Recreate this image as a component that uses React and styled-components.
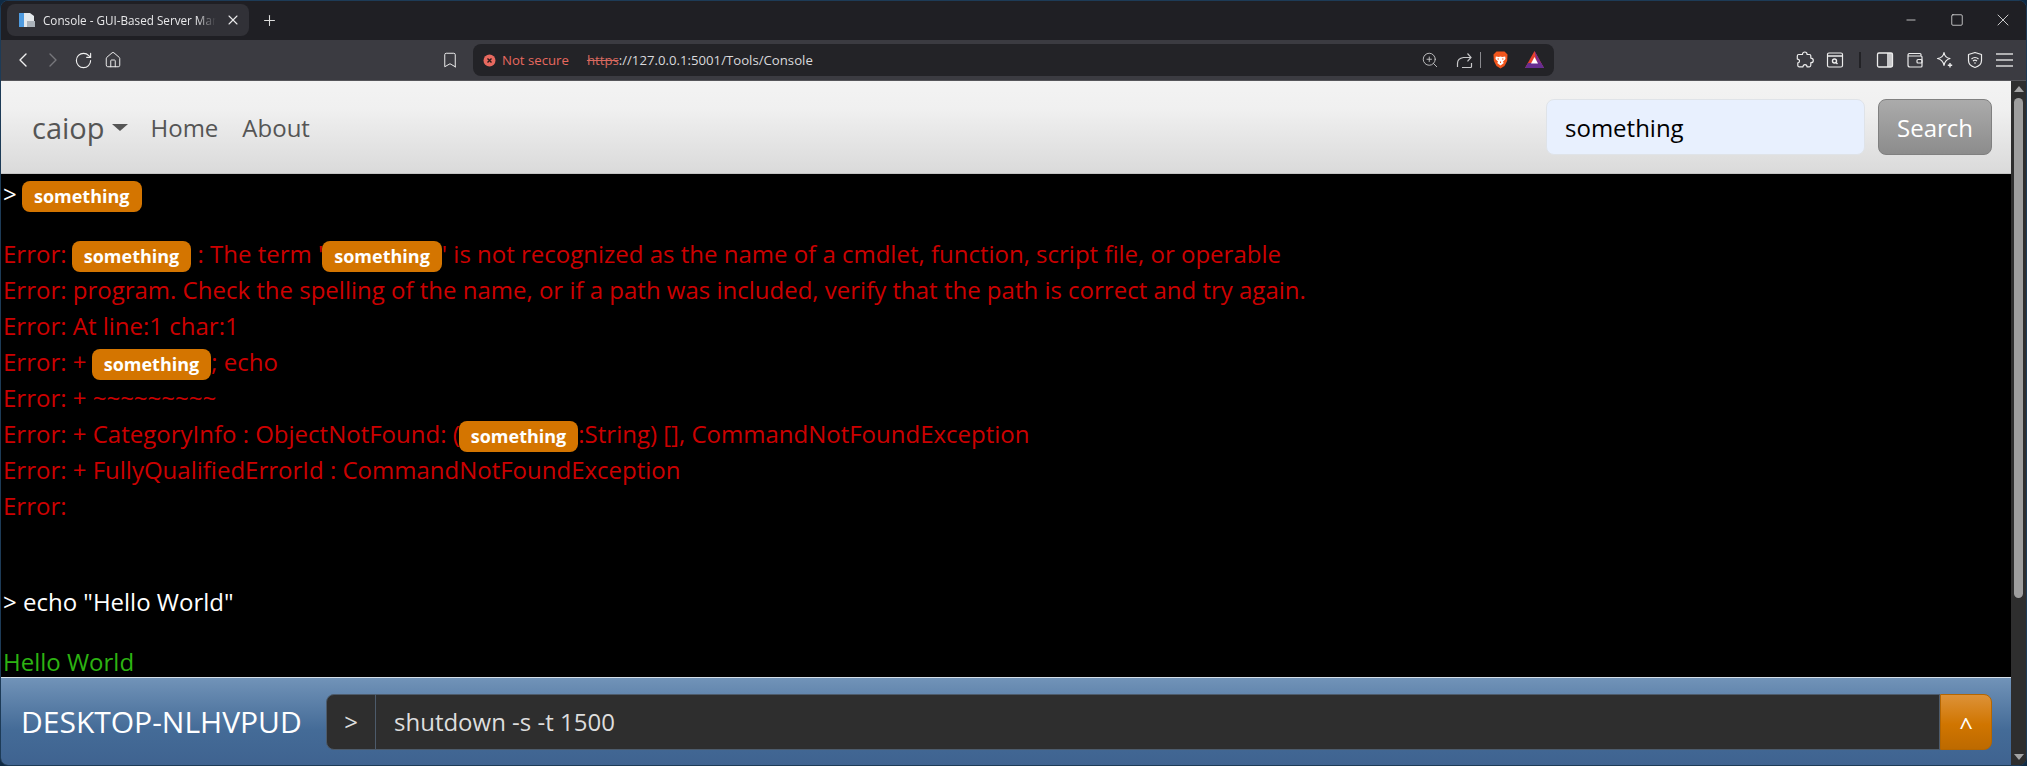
import React from 'react'
import styled, { createGlobalStyle } from 'styled-components'
import { ChevronLeft, ChevronRight, RotateCw, House, Bookmark, ZoomIn, X, Plus, Minus, Square } from 'lucide-react'

const GlobalStyle = createGlobalStyle`
    html, body {
        margin: 0;
        padding: 0;
        height: 100%;
        background: #0f2a44;
        overflow: hidden;
    }
`

const Win = styled.div`
    display: flex;
    flex-direction: column;
    width: 2027px;
    height: 766px;
    box-sizing: border-box;
    border: 1px solid #1d3b57;
    border-radius: 8px;
    overflow: hidden;
    font-family: 'Open Sans', sans-serif;
    background: #1f1f24;
`

const TabStrip = styled.div`
    display: flex;
    align-items: flex-start;
    height: 39px;
    flex: none;
    background: #1f1f24;
    padding: 3px 0 0 6px;
    box-sizing: border-box;
`

const Tab = styled.div`
    display: flex;
    align-items: center;
    width: 242px;
    height: 32px;
    box-sizing: border-box;
    padding: 0 8px 0 12px;
    background: #313137;
    border-radius: 8px;
    color: #e8e8ea;
    font-size: 11.7px;
`

const TabTitle = styled.span`
    flex: 1;
    margin-left: 8px;
    white-space: nowrap;
    overflow: hidden;
    mask-image: linear-gradient(to right, #000 84%, transparent 95%);
`

const NewTab = styled.span`
    display: flex;
    align-items: center;
    height: 32px;
    margin-left: 12px;
    color: #dcdcdc;
`

const WinControls = styled.div`
    display: flex;
    margin-left: auto;
    align-items: center;
    height: 32px;
    color: #ececec;
`

const WinButton = styled.span`
    display: flex;
    justify-content: center;
    width: 46px;
`

const Toolbar = styled.div`
    display: flex;
    align-items: center;
    height: 41px;
    flex: none;
    background: #3b3b41;
    box-sizing: border-box;
    border-bottom: 1px solid #55555a;
`

const NavIcons = styled.div`
    display: flex;
    align-items: center;
    padding-left: 7px;
    color: #f0f0f0;
`

const IconSlot = styled.span`
    display: flex;
    justify-content: center;
    flex: none;
    width: ${p => p.$w || 30}px;
    color: ${p => p.$dim ? '#77777c' : 'inherit'};
    margin-left: ${p => p.$ml || 0}px;
`

const Omnibox = styled.div`
    display: flex;
    align-items: center;
    width: 1081px;
    height: 32px;
    margin-left: 8px;
    flex: none;
    box-sizing: border-box;
    padding: 0 5px 0 10px;
    background: #232327;
    border-radius: 8px;
    font-size: 13.2px;
`

const NotSecure = styled.span`
    margin-left: 6px;
    color: #e8695f;
`

const Url = styled.span`
    margin-left: 18px;
    color: #d9d9dc;
    s {
        color: #d9695f;
    }
`

const OmniRight = styled.div`
    display: flex;
    align-items: center;
    margin-left: auto;
    color: #c8c8ca;
`

const VSep = styled.span`
    flex: none;
    width: ${p => p.$w || 1}px;
    height: ${p => p.$h || 16}px;
    margin: 0 ${p => p.$m || 0}px;
    background: ${p => p.$c || '#8a8a8e'};
`

const ExtIcons = styled.div`
    display: flex;
    align-items: center;
    margin-left: auto;
    padding-right: 6px;
    color: #ececec;
`

const Body = styled.div`
    display: flex;
    flex: 1;
    min-height: 0;
`

const Page = styled.div`
    display: flex;
    flex-direction: column;
    flex: 1;
    min-width: 0;
    font-size: 24px;
    line-height: 36px;
`

const Navbar = styled.nav`
    display: flex;
    align-items: center;
    height: 93px;
    flex: none;
    box-sizing: border-box;
    padding: 0 19px 0 31px;
    background: linear-gradient(#f3f3f3, #f0f0f0 30%, #dadada);
    border-bottom: 1px solid #c4c4c4;
    color: #555;
`

const Brand = styled.span`
    padding-top: 2px;
    font-size: 29px;
    color: #555;
`

const Caret = styled.span`
    width: 0;
    height: 0;
    margin-left: 7px;
    border-left: 8px solid transparent;
    border-right: 8px solid transparent;
    border-top: 7px solid #555;
`

const NavLink = styled.a`
    padding-top: 2px;
    margin-left: ${p => p.$ml}px;
    font-size: 24px;
    color: #555;
`

const SearchInput = styled.div`
    width: 319px;
    height: 56px;
    margin-left: auto;
    display: flex;
    align-items: center;
    box-sizing: border-box;
    padding: 2px 0 0 18px;
    background: #e8f0fe;
    border: 1px solid #dfe3e8;
    border-radius: 8px;
    color: #000;
    font-size: 24px;
`

const SearchButton = styled.div`
    width: 114px;
    height: 56px;
    margin-left: 13px;
    padding-top: 2px;
    display: flex;
    align-items: center;
    justify-content: center;
    box-sizing: border-box;
    background: linear-gradient(#ababab, #8c8c8c);
    border: 1px solid #808080;
    border-radius: 8px;
    color: #fff;
    font-size: 24px;
`

const Console = styled.div`
    flex: 1;
    min-height: 0;
    overflow: hidden;
    background: #000;
    padding: 2px 0 0 2px;
    font-size: 24px;
`

const Line = styled.div`
    height: 36px;
    line-height: 36px;
    white-space: pre;
    color: ${p => p.$c};
    margin-bottom: ${p => p.$mb || 0}px;
`

const Mark = styled.span`
    display: inline-block;
    height: 31px;
    line-height: 31px;
    margin-left: -1px;
    padding: 0 12px;
    border-radius: 8px;
    background: #d47500;
    color: #fff;
    font-size: 18px;
    font-weight: 700;
    vertical-align: 0;
`

const BottomBar = styled.div`
    display: flex;
    align-items: center;
    height: 88px;
    flex: none;
    box-sizing: border-box;
    padding: 0 19px 0 20px;
    background: linear-gradient(#7193b8, #446b97 60%, #3f6390);
    border-top: 1px solid #d6e0ea;
`

const HostName = styled.span`
    width: 305px;
    color: #fff;
    font-size: 30px;
`

const Prefix = styled.div`
    display: flex;
    align-items: center;
    justify-content: center;
    width: 50px;
    height: 56px;
    box-sizing: border-box;
    background: #2e2e2e;
    border: 1px solid #4d5b6b;
    border-radius: 8px 0 0 8px;
    color: #ddd;
`

const CommandInput = styled.div`
    flex: 1;
    height: 56px;
    display: flex;
    align-items: center;
    box-sizing: border-box;
    padding-left: 18px;
    background: #2e2e2e;
    border: 1px solid #4d5b6b;
    border-left: none;
    color: #ddd;
    font-size: 24px;
`

const SendButton = styled.div`
    width: 52px;
    height: 56px;
    padding-top: 8px;
    display: flex;
    align-items: center;
    justify-content: center;
    box-sizing: border-box;
    background: linear-gradient(#dd9238, #d07500 55%, #bd6a00);
    border: 1px solid #b56600;
    border-radius: 0 8px 8px 0;
    color: #fff;
    font-size: 24px;
`

const Scrollbar = styled.div`
    display: flex;
    flex-direction: column;
    align-items: center;
    width: 15px;
    flex: none;
    background: #2e2e2e;
`

const ArrowUp = styled.span`
    margin-top: 5px;
    border-left: 5px solid transparent;
    border-right: 5px solid transparent;
    border-bottom: 6px solid #a3a3a3;
`

const Thumb = styled.span`
    width: 9px;
    height: 500px;
    margin-top: 6px;
    border-radius: 5px;
    background: #9e9e9e;
`

const ArrowDown = styled.span`
    margin-top: auto;
    margin-bottom: 5px;
    border-left: 5px solid transparent;
    border-right: 5px solid transparent;
    border-top: 6px solid #a3a3a3;
`

const TabIcon = () => (
    <svg width="16" height="16" viewBox="0 0 16 16" style={{ flex: 'none' }}>
        <path d="M0 1h11l4 3v11H0z" fill="#e4e8ec" />
        <rect x="0" y="1" width="5" height="14" fill="#4f9be0" />
        <rect x="8" y="9" width="8" height="6" fill="#aab2ba" />
    </svg>
)

const ErrorDot = () => (
    <svg width="13" height="13" viewBox="0 0 13 13" style={{ flex: 'none' }}>
        <circle cx="6.5" cy="6.5" r="6" fill="#e8695f" />
        <path d="M4.5 4.5l4 4M8.5 4.5l-4 4" stroke="#2a1a1a" strokeWidth="1.4" />
    </svg>
)

const ShareIcon = () => (
    <svg width="17" height="17" viewBox="0 0 17 17" fill="none" stroke="currentColor" strokeWidth="1.2">
        <path d="M6 15.500h8.500a1 1 0 0 0 1-1V11M1.500 15V11.500C1.500 8 4 6 7.500 5.500l7-.1M11.500 1.500l3.500 3.900-3.500 3.900" />
    </svg>
)

const BraveLogo = () => (
    <svg width="15" height="18" viewBox="0 0 15 18">
        <path d="M3.500 0.500h8L14.500 3.500l-.4 6.500-2.600 5-4 2.500-4-2.500-2.600-5-.4-6.500z" fill="#f1561d" />
        <path d="M2.800 5.500l3 .5 1.700-.6 1.700.6 3-.5.300 2.500-2.600 2.800.9 1.200-3.300 2.500-3.300-2.500.9-1.200L2.500 8z" fill="#fff" />
        <path d="M6 8h-1.500M9 8h1.500M7.500 10.500v1.500" stroke="#f1561d" strokeWidth="1" />
    </svg>
)

const BatLogo = () => (
    <svg width="19" height="18" viewBox="0 0 19 18">
        <path d="M9.500 0L19 17H0z" fill="#e8402c" />
        <path d="M9.500 0L19 17H13z" fill="#7b2d8e" />
        <path d="M0 17l3-5h13l3 5z" fill="#662d91" />
        <path d="M9.500 6L13 12.500H6z" fill="#fff" />
    </svg>
)

const PuzzleIcon = () => (
    <svg width="18" height="18" viewBox="0 0 18 18" fill="none" stroke="currentColor" strokeWidth="1.2" strokeLinejoin="round">
        <path d="M6.500 3.500C6.500 1.800 7.500 1 8.800 1s2.300.8 2.300 2.500h2.400c.8 0 1.300.5 1.300 1.300v2.300c1.600 0 2.500 1 2.500 2.300s-.9 2.300-2.500 2.300v2.600c0 1-.6 1.500-1.400 1.500h-2.400c0-1.500-.9-2.200-2-2.200s-2 .7-2 2.200H3.200c-.8 0-1.400-.6-1.400-1.400v-2.500C2.800 11.900 3.500 11 3.500 10S2.800 8.100 1.300 8.100V5c0-.9.600-1.500 1.400-1.500z" />
    </svg>
)

const ReaderIcon = () => (
    <svg width="18" height="18" viewBox="0 0 18 18" fill="none" stroke="currentColor" strokeWidth="1.2">
        <rect x="1.5" y="2" width="15" height="14" rx="1.5" />
        <path d="M1.500 5h15" strokeWidth="1.6" />
        <circle cx="8.500" cy="10" r="2" strokeWidth="1.4" />
        <path d="M10 11.500l1.500 1.500" strokeWidth="1.4" />
    </svg>
)

const SidebarIcon = () => (
    <svg width="18" height="18" viewBox="0 0 18 18">
        <rect x="11" y="2" width="5.500" height="14" fill="#c8c8ca" />
        <rect x="1.500" y="2" width="15" height="14" rx="1.500" fill="none" stroke="currentColor" strokeWidth="1.300" />
    </svg>
)

const WalletIcon = () => (
    <svg width="18" height="18" viewBox="0 0 18 18" fill="none" stroke="currentColor" strokeWidth="1.2">
        <path d="M3 2.500h11a1 1 0 0 1 1 1V5M2 4.500a2 2 0 0 1 1-2M2 4.500V14a2 2 0 0 0 2 2h11a1 1 0 0 0 1-1V6a1 1 0 0 0-1-1H2.500" />
        <rect x="11" y="8.500" width="5" height="3.500" rx="1" />
    </svg>
)

const LeoIcon = () => (
    <svg width="18" height="18" viewBox="0 0 18 18" fill="none" stroke="currentColor" strokeWidth="1.2">
        <path d="M8 1.500c.5 3.500 2.500 5.500 6 6-3.500.8-5.200 2.700-6 7-.8-4.300-2.700-6.200-6.500-7C5.500 7 7.500 5 8 1.500z" strokeLinejoin="round" />
        <path d="M14 12v4.500M11.800 14.200h4.400" strokeWidth="1.4" />
    </svg>
)

const VpnIcon = () => (
    <svg width="18" height="18" viewBox="0 0 18 18" fill="none" stroke="currentColor" strokeWidth="1.2">
        <path d="M9 1.500l6.500 2v6c0 3.500-3 6-6.500 7-3.500-1-6.500-3.500-6.500-7v-6z" strokeLinejoin="round" />
        <path d="M5.500 8c2-1.800 5-1.800 7 0M7 10c1.200-1 2.800-1 4 0" />
        <circle cx="9" cy="12" r=".8" fill="currentColor" stroke="none" />
    </svg>
)

const MenuIcon = () => (
    <svg width="18" height="16" viewBox="0 0 18 16" stroke="#b0b0b2" strokeWidth="2">
        <path d="M0 2h17M0 8h17M0 14h17" />
    </svg>
)

const SomeMark = () => <Mark>something</Mark>

function App() {
    return (
        <Win>
            <GlobalStyle />
            <TabStrip>
                <Tab>
                    <TabIcon />
                    <TabTitle>Console - GUI-Based Server Management</TabTitle>
                    <X size={16} strokeWidth={1.6} />
                </Tab>
                <NewTab><Plus size={17} strokeWidth={1.5} /></NewTab>
                <WinControls>
                    <WinButton><Minus size={14} strokeWidth={1.3} /></WinButton>
                    <WinButton><Square size={14} strokeWidth={1.3} /></WinButton>
                    <WinButton><X size={20} strokeWidth={1} /></WinButton>
                </WinControls>
            </TabStrip>
            <Toolbar>
                <NavIcons>
                    <IconSlot><ChevronLeft size={24} strokeWidth={1.4} /></IconSlot>
                    <IconSlot $dim><ChevronRight size={24} strokeWidth={1.4} /></IconSlot>
                    <IconSlot><RotateCw size={19} strokeWidth={1.4} /></IconSlot>
                    <IconSlot><House size={18} strokeWidth={1.3} /></IconSlot>
                    <IconSlot $ml={307}><Bookmark size={18} strokeWidth={1.3} /></IconSlot>
                </NavIcons>
                <Omnibox>
                    <ErrorDot />
                    <NotSecure>Not secure</NotSecure>
                    <Url><s>https</s>://127.0.0.1:5001/Tools/Console</Url>
                    <OmniRight>
                        <IconSlot $w={37}><ZoomIn size={18} strokeWidth={1.2} /></IconSlot>
                        <IconSlot $w={32}><ShareIcon /></IconSlot>
                        <VSep />
                        <IconSlot $w={38}><BraveLogo /></IconSlot>
                        <IconSlot><BatLogo /></IconSlot>
                    </OmniRight>
                </Omnibox>
                <ExtIcons>
                    <IconSlot><PuzzleIcon /></IconSlot>
                    <IconSlot><ReaderIcon /></IconSlot>
                    <VSep $m={9} $w={2} $c="#222226" />
                    <IconSlot><SidebarIcon /></IconSlot>
                    <IconSlot><WalletIcon /></IconSlot>
                    <IconSlot><LeoIcon /></IconSlot>
                    <IconSlot><VpnIcon /></IconSlot>
                    <IconSlot><MenuIcon /></IconSlot>
                </ExtIcons>
            </Toolbar>
            <Body>
                <Page>
                    <Navbar>
                        <Brand>caiop</Brand>
                        <Caret />
                        <NavLink $ml={23}>Home</NavLink>
                        <NavLink $ml={24}>About</NavLink>
                        <SearchInput>something</SearchInput>
                        <SearchButton>Search</SearchButton>
                    </Navbar>
                    <Console>
                        <Line $c="#fff" $mb={24}>&gt; <SomeMark /></Line>
                        <Line $c="#cc0000">Error: <SomeMark /> : The term '<SomeMark />' is not recognized as the name of a cmdlet, function, script file, or operable</Line>
                        <Line $c="#cc0000">Error: program. Check the spelling of the name, or if a path was included, verify that the path is correct and try again.</Line>
                        <Line $c="#cc0000">Error: At line:1 char:1</Line>
                        <Line $c="#cc0000">Error: + <SomeMark />; echo</Line>
                        <Line $c="#cc0000">Error: + ~~~~~~~~~</Line>
                        <Line $c="#cc0000">Error: + CategoryInfo : ObjectNotFound: (<SomeMark />:String) [], CommandNotFoundException</Line>
                        <Line $c="#cc0000">Error: + FullyQualifiedErrorId : CommandNotFoundException</Line>
                        <Line $c="#cc0000" $mb={60}>Error:</Line>
                        <Line $c="#fff" $mb={24}>&gt; echo "Hello World"</Line>
                        <Line $c="#2db312">Hello World</Line>
                    </Console>
                    <BottomBar>
                        <HostName>DESKTOP-NLHVPUD</HostName>
                        <Prefix>&gt;</Prefix>
                        <CommandInput>shutdown -s -t 1500</CommandInput>
                        <SendButton>^</SendButton>
                    </BottomBar>
                </Page>
                <Scrollbar>
                    <ArrowUp />
                    <Thumb />
                    <ArrowDown />
                </Scrollbar>
            </Body>
        </Win>
    )
}

export default App
